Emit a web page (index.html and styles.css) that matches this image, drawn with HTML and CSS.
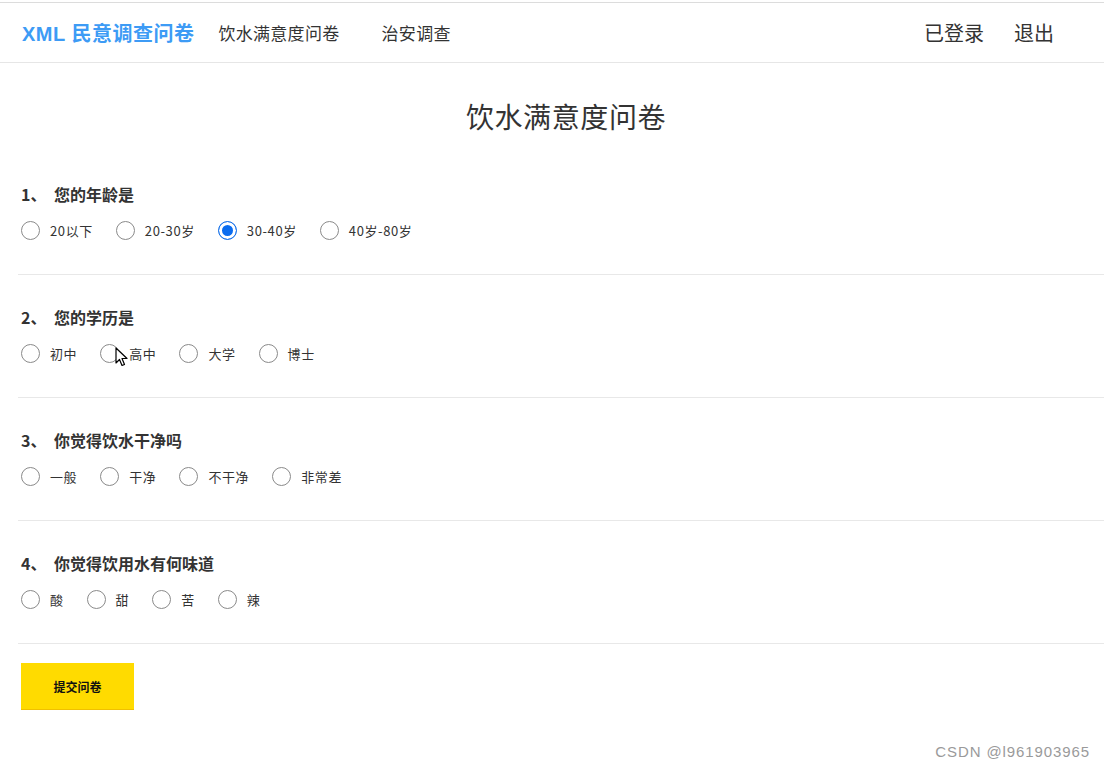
FILE: index.html
```html
<!DOCTYPE html>
<html lang="zh-CN">
<head>
    <meta charset="UTF-8">
    <title>饮水满意度问卷</title>
    <link rel="stylesheet" href="styles.css">
</head>
<body>
    <!-- 顶部导航 -->
    <div class="navbar">
        <a class="brand" href="#">XML 民意调查问卷</a>
        <a class="nav-link" href="#">饮水满意度问卷</a>
        <a class="nav-link" href="#">治安调查</a>
        <div class="nav-right">
            <a class="user-link" href="#">已登录</a>
            <a class="user-link" href="#">退出</a>
        </div>
    </div>

    <div class="container">
        <h1 class="page-title">饮水满意度问卷</h1>

        <form class="survey">
            <div class="question">
                <div class="question-title"><span class="q-no">1、</span>您的年龄是</div>
                <div class="options">
                    <label class="option"><input type="radio" name="q1">20以下</label>
                    <label class="option"><input type="radio" name="q1">20-30岁</label>
                    <label class="option"><input type="radio" name="q1" checked>30-40岁</label>
                    <label class="option"><input type="radio" name="q1">40岁-80岁</label>
                </div>
            </div>

            <div class="question">
                <div class="question-title"><span class="q-no">2、</span>您的学历是</div>
                <div class="options">
                    <label class="option"><input type="radio" name="q2">初中</label>
                    <label class="option"><input type="radio" name="q2">高中
                        <svg class="cursor" width="14" height="20" viewBox="0 0 14 20">
                            <path d="M1 1 L1 16 L4.5 12.5 L7 18.5 L9.5 17.5 L7 11.5 L12 11.5 Z" fill="#fff" stroke="#000" stroke-width="1.2" stroke-linejoin="round"/>
                        </svg>
                    </label>
                    <label class="option"><input type="radio" name="q2">大学</label>
                    <label class="option"><input type="radio" name="q2">博士</label>
                </div>
            </div>

            <div class="question">
                <div class="question-title"><span class="q-no">3、</span>你觉得饮水干净吗</div>
                <div class="options">
                    <label class="option"><input type="radio" name="q3">一般</label>
                    <label class="option"><input type="radio" name="q3">干净</label>
                    <label class="option"><input type="radio" name="q3">不干净</label>
                    <label class="option"><input type="radio" name="q3">非常差</label>
                </div>
            </div>

            <div class="question">
                <div class="question-title"><span class="q-no">4、</span>你觉得饮用水有何味道</div>
                <div class="options">
                    <label class="option"><input type="radio" name="q4">酸</label>
                    <label class="option"><input type="radio" name="q4">甜</label>
                    <label class="option"><input type="radio" name="q4">苦</label>
                    <label class="option"><input type="radio" name="q4">辣</label>
                </div>
            </div>

            <button type="button" class="submit-btn">提交问卷</button>
        </form>
    </div>

    <div class="watermark">CSDN @l961903965</div>
</body>
</html>
```

FILE: styles.css
```css
body {
    margin: 0;
    padding-top: 2px;
    font-family: "Microsoft YaHei", "Noto Sans CJK SC", sans-serif;
    background-color: #fff;
    color: #333;
}
a {
    text-decoration: none;
}
.navbar {
    display: flex;
    align-items: center;
    height: 59px;
    border-top: 1px solid #dcdcdc;
    border-bottom: 1px solid #e6e6e6;
    padding-left: 22px;
}
.brand {
    font-size: 20px;
    font-weight: bold;
    color: #3d9bf5;
    margin-right: 24px;
    letter-spacing: 0.5px;
    font-family: "Liberation Sans", "Noto Sans CJK SC", sans-serif;
}
.nav-link {
    font-size: 17px;
    color: #333;
    margin-right: 42px;
    letter-spacing: 0.3px;
}
.nav-right {
    margin-left: auto;
    display: flex;
    gap: 30px;
    padding-right: 50px;
}
.user-link {
    font-size: 20px;
    color: #333;
}
.container {
    padding-left: 18px;
}
.page-title {
    margin: 33px 0 16px;
    padding-left: 10px;
    text-align: center;
    font-size: 28px;
    font-weight: normal;
    line-height: 40px;
    color: #333;
    letter-spacing: 0.6px;
}
.question {
    padding: 30px 0 34px 3px;
    border-bottom: 1px solid #e8e8e8;
}
.question-title {
    font-size: 16px;
    font-weight: bold;
    line-height: 24px;
    color: #333;
    margin-bottom: 14px;
}
.q-no {
    display: inline-block;
    width: 33px;
}
.options {
    display: flex;
    align-items: center;
    gap: 23px;
    height: 20px;
}
.option {
    display: flex;
    align-items: center;
    font-size: 13px;
    letter-spacing: 0.6px;
    color: #333;
    position: relative;
}
.option input {
    appearance: none;
    -webkit-appearance: none;
    width: 19px;
    height: 19px;
    margin: 0 10px 0 0;
    border: 1px solid #8a8a8a;
    border-radius: 50%;
    background: #fff;
}
.option input:checked {
    border-color: #1a73e8;
    background: #0a6cf0;
    box-shadow: inset 0 0 0 3px #fff;
}
.cursor {
    position: absolute;
    left: 15px;
    top: 3px;
}
.submit-btn {
    margin-top: 19px;
    margin-left: 3px;
    width: 113px;
    height: 47px;
    border: none;
    border-bottom: 1px solid #f0c000;
    background-color: #ffdb00;
    font-family: inherit;
    font-size: 12px;
    font-weight: bold;
    color: #111;
}
.watermark {
    position: absolute;
    right: 14px;
    top: 743px;
    font-family: "Liberation Sans", sans-serif;
    font-size: 15px;
    color: #9a9a9a;
    letter-spacing: 0.9px;
}
```
